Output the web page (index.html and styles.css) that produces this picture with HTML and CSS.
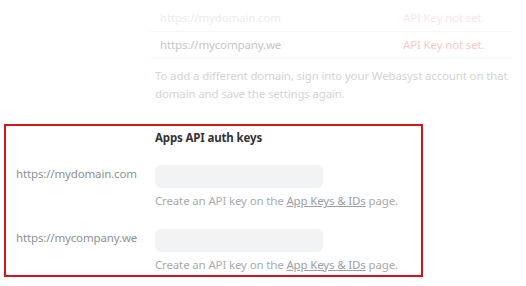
FILE: index.html
```html
<!DOCTYPE html>
<html lang="en">
<head>
    <meta charset="UTF-8">
    <meta name="viewport" content="width=device-width, initial-scale=1.0">
    <title>Webasyst ID settings</title>
    <link rel="stylesheet" href="styles.css">
</head>
<body>

<div class="faded">
    <table class="domainTable">
        <tr class="rowFar">
            <td class="domainCell">https://mydomain.com</td>
            <td class="statusCell">API Key not set.</td>
        </tr>
        <tr class="rowNear">
            <td class="domainCell">https://mycompany.we</td>
            <td class="statusCell">API Key not set.</td>
        </tr>
    </table>
    <p class="note">To add a different domain, sign into your Webasyst account on that domain and save the settings again.</p>
</div>

<section class="authKeys">
    <div></div>
    <div class="authTitle">Apps API auth keys</div>

    <div class="domainLabel">https://mydomain.com</div>
    <div class="keyField">
        <input type="text" class="keyInput">
        <div class="hint">Create an API key on the <a href="#">App Keys &amp; IDs</a> page.</div>
    </div>

    <div class="domainLabel">https://mycompany.we</div>
    <div class="keyField">
        <input type="text" class="keyInput">
        <div class="hint">Create an API key on the <a href="#">App Keys &amp; IDs</a> page.</div>
    </div>
</section>

</body>
</html>
```

FILE: styles.css
```css
body {
    margin: 0;
    padding: 0;
    background: #ffffff;
    font-family: "Noto Sans", "Open Sans", sans-serif;
    font-size: 11.5px;
    letter-spacing: -0.15px;
    color: #333;
}

.faded {
    margin-left: 150px;
    width: 362px;
    padding-top: 5px;
}

.domainTable {
    width: 100%;
    border-collapse: collapse;
}

.domainTable td {
    height: 25px;
    padding: 0 0 1px 0;
    border-bottom: 1px solid #f7f7f7;
}

.domainCell {
    padding-left: 10px !important;
    width: 243px;
    white-space: nowrap;
}

.rowFar .domainCell {
    color: #ececec;
}

.rowFar .statusCell {
    color: #fbe6e6;
}

.rowNear .domainCell {
    color: #c6c6c6;
}

.rowNear .statusCell {
    color: #f6caca;
}

.note {
    margin: 8px 0 0 5px;
    line-height: 18px;
    color: #d4d4d4;
}

.authKeys {
    margin: 21px 0 0 4px;
    width: 419px;
    border: 2px solid #d4161c;
    padding: 3px 0 0 10px;
    box-sizing: border-box;
    height: 153px;
    display: grid;
    grid-template-columns: 139px 1fr;
    row-gap: 17px;
    line-height: 18px;
}

.authTitle {
    font-weight: bold;
    color: #333;
}

.domainLabel {
    color: #8c9198;
}

.keyField {
    display: flex;
    flex-direction: column;
    gap: 4px;
}

.keyInput {
    width: 168px;
    height: 23px;
    box-sizing: border-box;
    border: none;
    border-radius: 6px;
    background: #f2f3f5;
    margin: 0;
}

.hint {
    color: #a8abb0;
}

.hint a {
    color: #9a9ea5;
}
```
